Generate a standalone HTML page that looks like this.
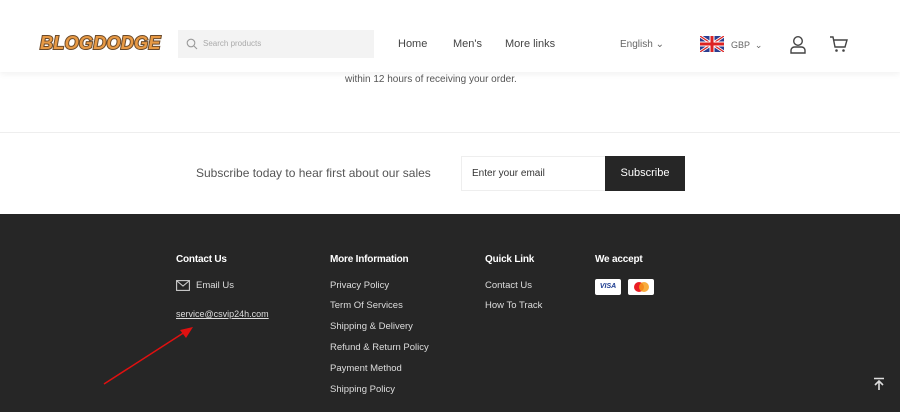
<!DOCTYPE html>
<html><head><meta charset="utf-8"><style>
*{margin:0;padding:0;box-sizing:border-box}
body{width:900px;height:412px;overflow:hidden;background:#fff;font-family:"Liberation Sans",sans-serif;position:relative}
.abs{position:absolute}
.hdr{left:0;top:0;width:900px;height:72px;background:#fff;box-shadow:0 2px 6px rgba(0,0,0,.06);z-index:2}
.logo{left:40px;top:33px;font:900 italic 18px "Liberation Sans",sans-serif;color:#e89a45;-webkit-text-stroke:2px #6b4a2a;paint-order:stroke fill;letter-spacing:0.3px}
.search{left:178px;top:30px;width:196px;height:28px;background:#f3f3f3}
.search span{position:absolute;left:25px;top:9px;font-size:8px;color:#aaa}
.nav{top:38px;font-size:11px;color:#444}
.ft{left:0;top:214px;width:900px;height:198px;background:#262626;color:#e6e6e6}
.ft .h{position:absolute;font-size:10px;font-weight:bold;color:#fff;letter-spacing:-.2px}
.ft .l{position:absolute;font-size:9.5px;color:#ddd}
</style></head><body>
<div class="abs hdr">
 <div class="abs logo">BLOGDODGE</div>
 <div class="abs search">
  <svg style="position:absolute;left:8px;top:8px" width="12" height="12" viewBox="0 0 12 12"><circle cx="5" cy="5" r="3.8" fill="none" stroke="#999" stroke-width="1.1"/><path d="M8 8l3 3" stroke="#999" stroke-width="1.1"/></svg>
  <span>Search products</span></div>
 <div class="abs nav" style="left:398px">Home</div>
 <div class="abs nav" style="left:453px">Men's</div>
 <div class="abs nav" style="left:505px">More links</div>
 <div class="abs nav" style="left:620px;font-size:10px;top:39px;color:#666">English ⌄</div>
 <svg class="abs" style="left:700px;top:36px" width="24" height="16" viewBox="0 0 24 16"><rect width="24" height="16" fill="#2b3d8f"/><path d="M0 0L24 16M24 0L0 16" stroke="#fff" stroke-width="3"/><path d="M0 0L24 16M24 0L0 16" stroke="#d22" stroke-width="1.2"/><path d="M12 0V16M0 8H24" stroke="#fff" stroke-width="5"/><path d="M12 0V16M0 8H24" stroke="#d22" stroke-width="3"/></svg>
 <div class="abs nav" style="left:731px;font-size:9px;top:40px;color:#666">GBP &nbsp;⌄</div>
 <svg class="abs" style="left:789px;top:35px" width="18" height="19" viewBox="0 0 18 19"><circle cx="9" cy="6" r="4.3" fill="none" stroke="#444" stroke-width="1.4"/><path d="M2 18v-2.5c0-2 1.5-3.5 3.5-3.5h7c2 0 3.5 1.5 3.5 3.5V18z" fill="none" stroke="#444" stroke-width="1.4"/></svg>
 <svg class="abs" style="left:829px;top:35px" width="19" height="18" viewBox="0 0 19 18"><path d="M1 2h3l2 10h10l2-7H5" fill="none" stroke="#444" stroke-width="1.4"/><circle cx="7.5" cy="15.5" r="1.3" fill="#444"/><circle cx="14.5" cy="15.5" r="1.3" fill="#444"/></svg>
</div>
<div class="abs" style="left:345px;top:74px;font-size:10px;color:#555">within 12 hours of receiving your order.</div>
<div class="abs" style="left:0;top:132px;width:900px;height:1px;background:#eee"></div>
<div class="abs" style="left:196px;top:166px;font-size:12px;color:#555">Subscribe today to hear first about our sales</div>
<div class="abs" style="left:461px;top:156px;width:146px;height:35px;border:1px solid #eee;background:#fff"><span style="position:absolute;left:10px;top:11px;font-size:10px;color:#333">Enter your email</span></div>
<div class="abs" style="left:605px;top:156px;width:80px;height:35px;background:#262626;color:#fff;font-size:11px;text-align:center;line-height:35px">Subscribe</div>
<div class="abs ft">
 <div class="h" style="left:176px;top:40px">Contact Us</div>
 <svg style="position:absolute;left:176px;top:66px" width="14" height="11" viewBox="0 0 14 11"><rect x=".6" y=".6" width="12.8" height="9.8" fill="none" stroke="#ccc" stroke-width="1.1"/><path d="M1 1l6 5 6-5" fill="none" stroke="#ccc" stroke-width="1.1"/></svg>
 <div class="l" style="left:196px;top:66px">Email Us</div>
 <div class="l" style="left:176px;top:95px;text-decoration:underline;font-size:9px">service@csvip24h.com</div>
 <div class="h" style="left:330px;top:40px">More Information</div>
 <div class="l" style="left:330px;top:66px">Privacy Policy</div>
 <div class="l" style="left:330px;top:86px">Term Of Services</div>
 <div class="l" style="left:330px;top:107px">Shipping &amp; Delivery</div>
 <div class="l" style="left:330px;top:128px">Refund &amp; Return Policy</div>
 <div class="l" style="left:330px;top:149px">Payment Method</div>
 <div class="l" style="left:330px;top:170px">Shipping Policy</div>
 <div class="h" style="left:485px;top:40px">Quick Link</div>
 <div class="l" style="left:485px;top:66px">Contact Us</div>
 <div class="l" style="left:485px;top:86px">How To Track</div>
 <div class="h" style="left:595px;top:40px">We accept</div>
 <div style="position:absolute;left:595px;top:65px;width:26px;height:16px;background:#fff;border-radius:2px;font:bold italic 7px 'Liberation Sans';color:#1a3a8f;text-align:center;line-height:16px">VISA</div>
 <div style="position:absolute;left:628px;top:65px;width:26px;height:16px;background:#fff;border-radius:2px"><span style="position:absolute;left:6px;top:3px;width:10px;height:10px;border-radius:50%;background:#e91c24"></span><span style="position:absolute;left:11px;top:3px;width:10px;height:10px;border-radius:50%;background:#f79e1b;opacity:.85"></span></div>
 <svg style="position:absolute;left:872px;top:163px" width="14" height="14" viewBox="0 0 14 14"><path d="M2 1.5h10M7 13V4M3 8l4-4 4 4" fill="none" stroke="#ddd" stroke-width="1.6"/></svg>
</div>
<svg class="abs" style="left:100px;top:322px" width="100" height="66" viewBox="0 0 100 66"><path d="M4 62L88 8" stroke="#e01010" stroke-width="1.5"/><path d="M93 5L80 8L86 16z" fill="#e01010"/></svg>
</body></html>
